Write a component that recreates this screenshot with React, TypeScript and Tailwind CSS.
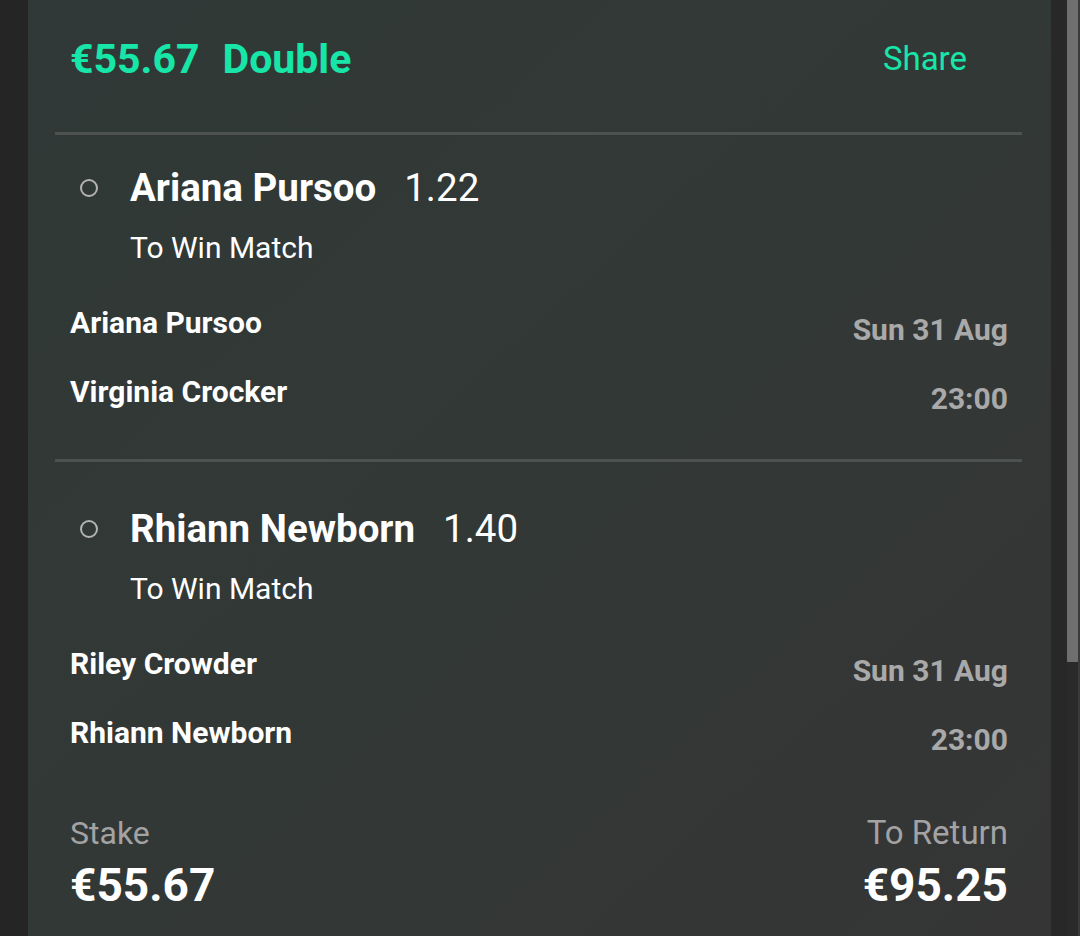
import React from "react";

const F = { fontFamily: "Roboto, 'Liberation Sans', sans-serif" };

function Leg({ pick, odds, home, away, first }: { pick: string; odds: string; home: string; away: string; first?: boolean }) {
  return (
    <div className={first ? "pt-[23px]" : "pt-[37px]"}>
      <div className="flex h-[60px] items-center">
        <div className="ml-[52px] h-[18px] w-[18px] rounded-full border-2 border-[#b3b3b3]" />
        <div className="ml-[32px] text-[38.5px] font-bold text-white">{pick}</div>
        <div className="ml-[28px] text-[38.5px] text-white">{odds}</div>
      </div>
      <div className="mt-[9px] flex h-[40px] items-center pl-[102px] text-[30px] text-white">To Win Match</div>
      <div className="mt-[35px] flex justify-between pl-[42px] pr-[43px]">
        <div className="flex h-[40px] items-center text-[30px] font-bold text-white">{home}</div>
        <div className="flex h-[40px] items-center pt-[14px] text-[30px] font-bold text-[#a9a9a9]">Sun 31 Aug</div>
      </div>
      <div className="mt-[29px] flex justify-between pl-[42px] pr-[43px]">
        <div className="flex h-[40px] items-center text-[30px] font-bold text-white">{away}</div>
        <div className="flex h-[40px] items-center pt-[14px] text-[30px] font-bold text-[#a9a9a9]">23:00</div>
      </div>
    </div>
  );
}

export default function App() {
  return (
    <div className="flex h-[936px] w-[1080px] overflow-hidden bg-[#262626]" style={F}>
      <div className="w-[28px] shrink-0 bg-[#252525]" />
      <div className="flex w-[1023px] shrink-0 flex-col bg-gradient-to-br from-[#303937] via-[#323836] to-[#353535]">
        <div className="flex h-[120px] items-center justify-between pl-[42px] pr-[84px]">
          <div className="flex items-center gap-[23px] text-[41px] font-bold text-[#17e6a8]">
            <span>€55.67</span>
            <span>Double</span>
          </div>
          <div className="-mt-[3px] text-[33px] text-[#17e6a8]">Share</div>
        </div>
        <div className="ml-[27px] mr-[29px] mt-[12px] h-[3px] bg-[#4d5250]" />
        <Leg first pick="Ariana Pursoo" odds="1.22" home="Ariana Pursoo" away="Virginia Crocker" />
        <div className="ml-[27px] mr-[29px] mt-[48px] h-[3px] bg-[#4d5250]" />
        <Leg pick="Rhiann Newborn" odds="1.40" home="Riley Crowder" away="Rhiann Newborn" />
        <div className="mt-[61px] flex justify-between pl-[42px] pr-[43px]">
          <div className="flex flex-col">
            <div className="flex h-[40px] items-center text-[32px] text-[#a3a3a3]">Stake</div>
            <div className="mt-[6px] flex h-[52px] items-center text-[46px] font-bold text-white">€55.67</div>
          </div>
          <div className="flex flex-col items-end">
            <div className="flex h-[40px] items-center text-[33px] text-[#a3a3a3]">To Return</div>
            <div className="mt-[6px] flex h-[52px] items-center text-[46px] font-bold text-white">€95.25</div>
          </div>
        </div>
      </div>
      <div className="w-[16px] shrink-0 bg-[#282828]" />
      <div className="flex w-[11px] shrink-0 flex-col">
        <div className="h-[662px] bg-[#6f6f6f]" />
        <div className="flex-1 bg-[#2a2a2a]" />
      </div>
      <div className="w-[2px] shrink-0 bg-[#3a3a3a]" />
    </div>
  );
}
